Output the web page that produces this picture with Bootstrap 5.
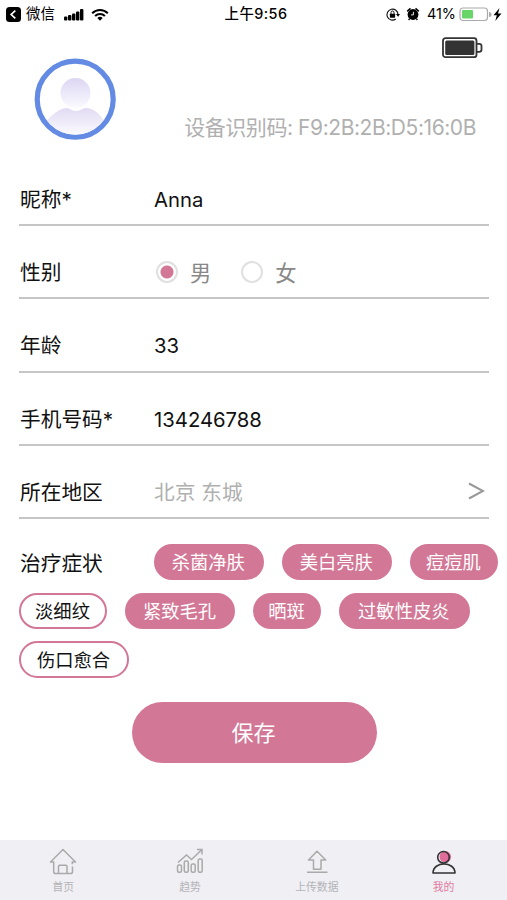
<!DOCTYPE html>
<html lang="zh-CN">
<head>
<meta charset="utf-8">
<meta name="viewport" content="width=device-width, initial-scale=1">
<title>我的</title>
<link rel="stylesheet" href="https://cdn.jsdelivr.net/npm/bootstrap@5.3.0/dist/css/bootstrap.min.css">
<style>
:root{--pink:#d37796}
body{font-family:Inter,"Noto Sans CJK SC",sans-serif;color:#111;background:#fff}
.screen{width:507px;height:900px}
.status-bar{height:28px;padding:0 5px 0 6px;font-size:14px;line-height:28px;color:#000}
.status-bar svg,.tab-item svg,.profile svg,.form-line svg{display:block;flex:none}
.status-side{flex:1 1 0}
.carrier{margin-left:5px;font-size:14.4px}
.signal{margin-left:8px}
.wifi{margin-left:6px}
.alarm{margin-left:6px}
.percent{margin-left:7px;margin-right:1px;font-size:14.4px}
.charge{margin-left:2px}
.bolt{margin-left:1px}
.clock{font-weight:500;font-size:14.4px;letter-spacing:.45px;margin-left:4px}
.profile{height:124px;padding:9px 24px 0 34px}
.avatar{margin-top:21px}
.device-code{font-size:21px;line-height:30px;color:#b0b0b0;margin-top:54px;margin-right:7px;letter-spacing:-.43px;white-space:nowrap}
.form-line{height:73.4px;margin:0 18px 0 19px;padding:23px 0 0 1px;border-bottom:2px solid #c6c6c6;font-size:20.7px;line-height:30px}
.form-line:first-child{margin-top:.4px}
.form-line .caption{width:134px;flex:none}
.form-line .content-value{font-size:20.3px}
.form-line .content-value.soft{color:#b0b0b0;font-size:20.7px}
.option{color:#888;font-size:21.3px}
.option + .option{margin-left:28px}
.option input{appearance:none;width:22px;height:22px;border:2px solid #e0e0e0;border-radius:50%;margin:-2px 12px 0 2px;background:#fff}
.option input:checked{background:radial-gradient(circle,var(--pink) 0 6px,#fff 7px)}
.symptoms{padding:24.5px 0 0 19px}
.tag-line{height:36.5px;margin-bottom:12.3px;gap:18.1px}
.tag-title{width:116.6px;padding:2px 0 0 1px;font-size:20.7px;line-height:36px;flex:none}
.tag{display:flex;align-items:center;justify-content:center;height:36.5px;flex:none;padding:1px 1px 0 0;border:2px solid var(--pink);border-radius:19px;background:#fff;color:#111;font-size:18.3px;line-height:1;white-space:nowrap}
.tag.on{background:var(--pink);color:#fff}
.w2{width:67.5px}.w3{width:88px}.w4{width:110px}.w5{width:131px}
.save{width:245px;height:61px;margin:12px 0 0 131.5px;border-radius:31px;border:0;background:var(--pink);color:#fff;font-size:22px;line-height:61px;padding:1px 1px 0 0}
.tab-bar{height:60px;background:#efeff4}
.tab-item{flex:1 1 0;padding-top:7px;color:#b4b4b7;font-size:10.8px;line-height:14px;text-decoration:none}
.tab-item svg{margin-bottom:4.5px}
.tab-item.current{color:#df7ba2}
</style>
<script src="https://cdn.jsdelivr.net/npm/bootstrap@5.3.0/dist/js/bootstrap.bundle.min.js"></script>
</head>
<body>
<div class="screen d-flex flex-column overflow-hidden">
  <header class="status-bar d-flex align-items-center">
    <div class="status-side d-flex align-items-center">
      <svg width="15" height="15" viewBox="0 0 15 15"><rect width="15" height="15" rx="3.5"/><path d="M9.3 3.6 5.2 7.5l4.1 3.9" fill="none" stroke="#fff" stroke-width="1.7"/></svg>
      <span class="carrier">微信</span>
      <svg class="signal" width="22" height="13" viewBox="0 0 22 13"><rect x="1" y="8.5" width="3.4" height="4" rx="1"/><rect x="5" y="7" width="3.4" height="5.5" rx="1"/><rect x="9" y="5.5" width="3.4" height="7" rx="1"/><rect x="13" y="3.5" width="3.4" height="9" rx="1"/><rect x="17" y="1" width="3.4" height="11.5" rx="1"/></svg>
      <svg class="wifi" width="18" height="13" viewBox="0 0 18 13"><g fill="none" stroke="#000" stroke-width="2"><path d="M1.2 5.2a11 11 0 0 1 15.6 0"/><path d="M4.1 8a7 7 0 0 1 9.8 0"/></g><path d="M6.3 9.9a4 4 0 0 1 5.4 0L9 12.8Z"/></svg>
    </div>
    <div class="clock">上午9:56</div>
    <div class="status-side d-flex align-items-center justify-content-end">
      <svg width="15" height="15" viewBox="0 0 15 15"><path d="M13 7.5A5.5 5.5 0 1 0 10.8 12" fill="none" stroke="#111" stroke-width="1.1"/><path d="m10.9 7 2.2 2.8L15 7Z"/><rect x="4.9" y="6.7" width="5.2" height="4" rx=".6"/><path d="M6 7V5.5a1.5 1.5 0 0 1 3 0V7" fill="none" stroke="#111"/></svg>
      <svg class="alarm" width="14" height="14" viewBox="0 0 14 14"><circle cx="7" cy="7.5" r="5.4"/><path d="M1.2 4.3 4.5 1.4M12.8 4.3 9.5 1.4" stroke="#000" stroke-width="1.6"/><path d="M3.6 11.6 2.6 13M10.4 11.6l1 1.4" stroke="#000" stroke-width="1.3"/><path d="M7.4 4.8v3.1H5" fill="none" stroke="#fff" stroke-width=".9"/></svg>
      <span class="percent">41%</span>
      <svg class="charge" width="33" height="15" viewBox="0 0 33 15"><rect x="1" y="1" width="27.5" height="12.5" rx="3" fill="#fff" stroke="#aaa" stroke-width="1.2"/><rect x="3" y="3" width="11" height="8.5" rx="1" fill="#68d568"/><path d="M30 5a2.5 2.5 0 0 1 0 5Z" fill="#aaa"/></svg>
      <svg class="bolt" width="9" height="13" viewBox="0 0 9 13"><path d="M6.5 0 .5 7.2h3.3L2.3 13 8.5 5.5H5Z"/></svg>
    </div>
  </header>

  <section class="profile d-flex justify-content-between">
    <svg class="avatar" width="82" height="82" viewBox="0 0 82 82">
      <defs>
        <linearGradient id="face" x2="0" y2="1"><stop stop-color="#dcd6f3"/><stop offset="1" stop-color="#fbfaff"/></linearGradient>
        <linearGradient id="torso" x2="0" y2="1"><stop stop-color="#e1dbf3"/><stop offset="1" stop-color="#fcfbff"/></linearGradient>
        <clipPath id="inner"><circle cx="41.2" cy="41.2" r="35.5"/></clipPath>
      </defs>
      <circle cx="41.2" cy="41.2" r="38" fill="#fff" stroke="#638be4" stroke-width="5.2"/>
      <path clip-path="url(#inner)" d="M12 64c4-6 14-14 21-14 3 0 4 3 9 3s6-3 10-3c7 0 14 6 19 14C61 82 23 82 12 64Z" fill="url(#torso)"/>
      <circle cx="41.5" cy="35" r="15" fill="url(#face)"/>
    </svg>
    <div class="d-flex flex-column align-items-end">
      <svg width="41" height="22" viewBox="0 0 41 22"><rect x="1" y="1.2" width="33.5" height="19" rx="2.5" fill="#fff" stroke="#333" stroke-width="1.8"/><rect x="3.2" y="3.4" width="29.2" height="14.6" rx="1.5" fill="#333"/><path d="M35 6.8h2.2q2.3 0 2.3 2v4q0 2-2.3 2H35" fill="none" stroke="#333" stroke-width="1.8"/></svg>
      <div class="device-code">设备识别码: F9:2B:2B:D5:16:0B</div>
    </div>
  </section>

  <main class="flex-grow-1">
    <div class="form-line d-flex align-items-center"><div class="caption">昵称*</div><div class="content-value">Anna</div></div>
    <div class="form-line d-flex align-items-center">
      <div class="caption">性别</div>
      <label class="option d-flex align-items-center"><input type="radio" name="sex" checked>男</label>
      <label class="option d-flex align-items-center"><input type="radio" name="sex">女</label>
    </div>
    <div class="form-line d-flex align-items-center"><div class="caption">年龄</div><div class="content-value">33</div></div>
    <div class="form-line d-flex align-items-center"><div class="caption">手机号码*</div><div class="content-value">134246788</div></div>
    <div class="form-line d-flex align-items-center">
      <div class="caption">所在地区</div><div class="content-value soft">北京 东城</div>
      <svg class="ms-auto me-1 mb-1" width="17" height="18" viewBox="0 0 17 18"><path d="m1 1.5 14 7.5-14 7.5" fill="none" stroke="#999" stroke-width="2"/></svg>
    </div>

    <section class="symptoms">
      <div class="tag-line d-flex"><div class="tag-title">治疗症状</div><button class="tag on w4">杀菌净肤</button><button class="tag on w4">美白亮肤</button><button class="tag on w3">痘痘肌</button></div>
      <div class="tag-line d-flex"><button class="tag w3">淡细纹</button><button class="tag on w4">紧致毛孔</button><button class="tag on w2">晒斑</button><button class="tag on w5">过敏性皮炎</button></div>
      <div class="tag-line d-flex"><button class="tag w4">伤口愈合</button></div>
    </section>
    <button class="save btn">保存</button>
  </main>

  <nav class="tab-bar d-flex">
    <a class="tab-item d-flex flex-column align-items-center" href="#"><svg width="28" height="29" viewBox="0 0 28 29"><path d="M23.5 19.5v5.2q0 1.8-1.8 1.8H6.5q-1.8 0-1.8-1.8V15H1.5L14 2.5 26.5 15h-3.2v2.2M9.5 26.5v-7q0-1.2 1.2-1.2h6q1.3 0 1.3 1.2v7" fill="none" stroke="#aaa" stroke-width="1.5" stroke-linejoin="round"/></svg>首页</a>
    <a class="tab-item d-flex flex-column align-items-center" href="#"><svg width="28" height="29" viewBox="0 0 28 29"><g fill="none" stroke="#aaa" stroke-width="1.5"><rect x="1.5" y="18" width="4" height="7.2" rx="1.5"/><rect x="8.3" y="14" width="4" height="11.2" rx="1.5"/><rect x="15.2" y="17" width="4" height="8.2" rx="1.5"/><rect x="22.2" y="12" width="4" height="13.2" rx="1.5"/><path d="M2 15.5 10.5 8l5 4.5L26 2.5M21 2.5h5v5"/></g></svg>趋势</a>
    <a class="tab-item d-flex flex-column align-items-center" href="#"><svg width="28" height="29" viewBox="0 0 28 29"><path d="M14 4.3 22.7 13H18v9.3h-7.5V13H5.5ZM4 25.3h20.5" fill="none" stroke="#aaa" stroke-width="1.5" stroke-linejoin="round"/></svg>上传数据</a>
    <a class="tab-item current d-flex flex-column align-items-center" href="#"><svg width="28" height="29" viewBox="0 0 28 29"><circle cx="15.3" cy="9.8" r="5.8" fill="#e06c99"/><circle cx="13.5" cy="10.3" r="5.8" fill="none" stroke="#333" stroke-width="1.6"/><path d="M3 26c0-12 22-12 22 0Z" fill="none" stroke="#333" stroke-width="1.6" stroke-linejoin="round"/></svg>我的</a>
  </nav>
</div>
</body>
</html>
